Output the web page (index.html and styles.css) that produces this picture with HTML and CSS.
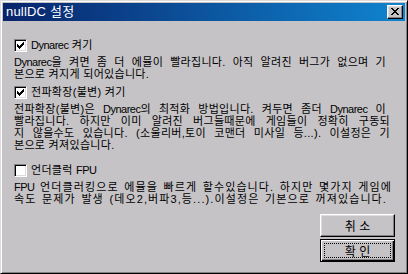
FILE: index.html
```html
<!DOCTYPE html>
<html lang="ko">
<head>
    <meta charset="UTF-8">
    <title>nullDC 설정</title>
    <link rel="stylesheet" href="styles.css">
</head>
<body>
    <div class="dialog">
        <div class="titlebar">
            <span class="title">nullDC 설정</span>
            <div class="close-btn">
                <svg width="8" height="7" viewBox="0 0 8 7">
                    <path d="M0 0h2v1h-2zM6 0h2v1h-2zM1 1h2v1h-2zM5 1h2v1h-2zM2 2h4v1h-4zM3 3h2v1h-2zM2 4h4v1h-4zM1 5h2v1h-2zM5 5h2v1h-2zM0 6h2v1h-2zM6 6h2v1h-2z" fill="#000"/>
                </svg>
            </div>
        </div>

        <div class="content">
            <!-- Dynarec -->
            <div class="option opt-1">
                <div class="check-row">
                    <div class="checkbox checked">
                        <svg width="7" height="7" viewBox="0 0 7 7">
                            <path d="M6 0h1v1h-1zM5 1h2v1h-2zM0 2h1v1h-1zM4 2h3v1h-3zM0 3h2v1h-2zM3 3h3v1h-3zM0 4h5v1h-5zM1 5h3v1h-3zM2 6h1v1h-1z" fill="#000"/>
                        </svg>
                    </div>
                    <span class="label"><span class="en">Dynarec</span> 켜기</span>
                </div>
                <p class="desc">
                    <span class="line"><span class="en">Dynarec</span>을 켜면 좀 더 에뮬이 빨라집니다. 아직 알려진 버그가 없으며 기</span>
                    <span class="line">본으로 켜지게 되어있습니다.</span>
                </p>
            </div>

            <!-- 전파확장 -->
            <div class="option opt-2">
                <div class="check-row">
                    <div class="checkbox checked">
                        <svg width="7" height="7" viewBox="0 0 7 7">
                            <path d="M6 0h1v1h-1zM5 1h2v1h-2zM0 2h1v1h-1zM4 2h3v1h-3zM0 3h2v1h-2zM3 3h3v1h-3zM0 4h5v1h-5zM1 5h3v1h-3zM2 6h1v1h-1z" fill="#000"/>
                        </svg>
                    </div>
                    <span class="label">전파확장(불변) 켜기</span>
                </div>
                <p class="desc">
                    <span class="line">전파확장(불변)은 <span class="en">Dynarec</span>의 최적화 방법입니다. 켜두면 좀더 <span class="en">Dynarec</span> 이</span>
                    <span class="line w-long">빨라집니다. 하지만 이미 알려진 버그들때문에 게임들이 정확히 구동되</span>
                    <span class="line w-long">지 않을수도 있습니다. (소울리버,토이 코맨더 미사일 등...). 이설정은 기</span>
                    <span class="line">본으로 켜져있습니다.</span>
                </p>
            </div>

            <!-- FPU -->
            <div class="option opt-3">
                <div class="check-row">
                    <div class="checkbox"></div>
                    <span class="label">언더클럭 <span class="en">FPU</span></span>
                </div>
                <p class="desc desc-wide">
                    <span class="line w-max"><span class="en">FPU</span> 언더클러킹으로 에뮬을 빠르게 할수있습니다. 하지만 몇가지 게임에</span>
                    <span class="line w-end">속도 문제가 발생 (데오2,버파3,등...).이설정은 기본으로 꺼져있습니다.</span>
                </p>
            </div>

            <div class="buttons">
                <div class="btn">취 소</div>
                <div class="btn btn-default"><span class="focus">확 인</span></div>
            </div>
        </div>
    </div>
</body>
</html>
```

FILE: styles.css
```css
body { margin: 0; background: #c6c3c6; }

.dialog {
    width: 408px;
    height: 274px;
    box-sizing: border-box;
    padding: 2px;
    border: 1px solid;
    border-color: #dedbde #000 #000 #dedbde;
    box-shadow: inset 1px 1px #fff, inset -1px -1px #848284;
    background: #c6c3c6;
    display: flex;
    flex-direction: column;
    font-family: "Liberation Sans", "Noto Sans CJK KR", sans-serif;
    font-size: 11px;
    letter-spacing: 0.3px;
    color: #000;
}
.en { letter-spacing: -0.5px; }

/* title bar */
.titlebar {
    height: 18px;
    display: flex;
    align-items: center;
    justify-content: space-between;
    padding: 0 2px 0 3px;
    background: linear-gradient(to right, #08246b, #1084d0);
}
.title { color: #fff; font-size: 13px; letter-spacing: 0.2px; line-height: 18px; }
.close-btn {
    width: 16px;
    height: 14px;
    box-sizing: border-box;
    border: 1px solid;
    border-color: #fff #000 #000 #fff;
    box-shadow: inset -1px -1px #848284, inset 1px 1px #dedbde;
    background: #c6c3c6;
    display: flex;
    align-items: center;
    justify-content: center;
}
.close-btn svg { display: block; margin: 0 1px 1px 0; }

/* options */
.content { padding: 18px 0 0 11px; flex: 1; }
.check-row { display: flex; align-items: center; gap: 4px; height: 13px; }
.checkbox {
    width: 13px;
    height: 13px;
    box-sizing: border-box;
    border: 1px solid;
    border-color: #848284 #fff #fff #848284;
    box-shadow: inset 1px 1px #000, inset -1px -1px #dedbde;
    background: #fff;
    display: flex;
    align-items: center;
    justify-content: center;
}
.checkbox svg { display: block; }
.label { line-height: 13px; white-space: nowrap; }

/* description: one block per line, stretched to the line end */
.desc { margin: 4px 0 0; line-height: 12.3px; }
.desc-wide { letter-spacing: 1.1px; }
.line {
    display: block;
    width: 372px;
    white-space: nowrap;
    text-align: justify;
    text-align-last: justify;
}
.line:last-child { text-align-last: left; }
.line.w-long { width: 376px; }
.line.w-max { width: 378px; }
.line.w-end { width: 373px; text-align-last: justify; }

.opt-1 { margin-bottom: 5px; }
.opt-2 { margin-bottom: 12px; }
.opt-3 { margin-bottom: 9px; }

/* buttons */
.buttons {
    display: flex;
    flex-direction: column;
    align-items: flex-end;
    gap: 2px;
    padding-right: 10px;
}
.btn {
    width: 75px;
    height: 23px;
    box-sizing: border-box;
    border: 1px solid;
    border-color: #fff #000 #000 #fff;
    box-shadow: inset -1px -1px #848284, inset 1px 1px #dedbde;
    display: flex;
    align-items: center;
    justify-content: center;
    font-size: 12px;
    letter-spacing: 0;
}
.btn-default {
    border-color: #000;
    box-shadow: inset 1px 1px #fff, inset -1px -1px #000, inset -2px -2px #848284;
    padding: 3px;
}
.focus {
    flex: 1;
    align-self: stretch;
    display: flex;
    align-items: center;
    justify-content: center;
    border: 1px dotted #000;
}
```
